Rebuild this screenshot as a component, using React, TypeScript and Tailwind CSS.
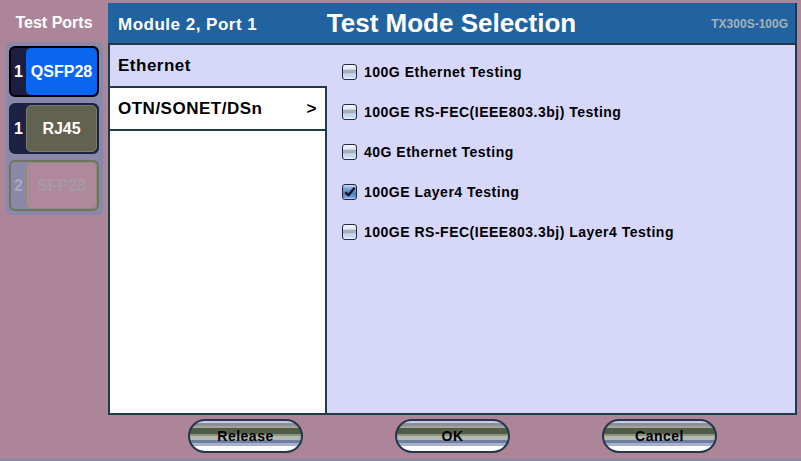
import React from "react";

const items = [
  { label: "100G Ethernet Testing", checked: false },
  { label: "100GE RS-FEC(IEEE803.3bj) Testing", checked: false },
  { label: "40G Ethernet Testing", checked: false },
  { label: "100GE Layer4 Testing", checked: true },
  { label: "100GE RS-FEC(IEEE803.3bj) Layer4 Testing", checked: false },
];

function CheckBox({ checked }: { checked: boolean }) {
  if (checked) {
    return (
      <div className="w-[15px] h-[16px] rounded-[3px] border border-[#1e2638] bg-[linear-gradient(to_bottom,#c8dcf4_0%,#7fa6d8_25%,#4f80c0_60%,#6b9ad4_85%,#b8d0f0_100%)] flex items-center justify-center shrink-0">
        <svg width="12" height="12" viewBox="0 0 12 12">
          <path d="M1.5 6.2 L4.4 9.3 L10.6 1.8" fill="none" stroke="#0f1428" strokeWidth="2.4" strokeLinejoin="round" />
        </svg>
      </div>
    );
  }
  return (
    <div className="w-[15px] h-[16px] rounded-[3px] border border-[#242a3a] bg-[linear-gradient(to_bottom,#f4f7fd_0%,#dfe7f5_30%,#a7adb4_38%,#a7adb4_56%,#bcd3f0_62%,#c9dcf4_85%,#eef4fc_100%)] shrink-0" />
  );
}

function PillButton({ label }: { label: string }) {
  return (
    <div className="w-[115px] h-[34px] rounded-full border-2 border-[#26364a] bg-[linear-gradient(to_bottom,#c9c9ef_0%,#c9c9ef_7%,#8c9094_7%,#8c9094_15%,#a4a498_15%,#a4a498_23%,#4e5c48_23%,#4e5c48_43%,#8c9482_43%,#8c9482_50%,#b6baae_50%,#b6baae_62%,#6e7ea0_62%,#6e7ea0_73%,#a8b0cc_73%,#a8b0cc_84%,#ffffff_84%,#ffffff_100%)] flex items-center justify-center text-[14px] font-bold tracking-[0.5px] text-black">
      {label}
    </div>
  );
}

export default function App() {
  return (
    <div className="w-[801px] h-[461px] bg-[#ad8599] border-b-2 border-[#8888a4] flex overflow-hidden font-['Liberation_Sans',Arial,sans-serif]">
      {/* Left column */}
      <div className="w-[108px] shrink-0 flex flex-col">
        <div className="h-[42px] pt-[3px] flex items-center justify-center text-white font-bold text-[16px]">Test Ports</div>
        <div className="ml-[6px] w-[97px] h-[173px] rounded-[6px] bg-[#8a88a8] pl-[3px] py-[4px] flex flex-col gap-[6px]">
          {/* Port 1 */}
          <div className="w-[90px] h-[51px] rounded-[6px] border-2 border-black bg-[#1b1e3e] flex overflow-hidden">
            <div className="w-[15px] flex items-center justify-center text-white font-bold text-[16px]">1</div>
            <div className="flex-1 rounded-[5px] bg-[#0a66f0] flex items-center justify-center text-white font-bold text-[16px]">QSFP28</div>
          </div>
          {/* Port 2 */}
          <div className="w-[90px] h-[51px] rounded-[6px] border-2 border-[#1d2244] bg-[#1d2244] flex overflow-hidden">
            <div className="w-[15px] flex items-center justify-center text-white font-bold text-[16px]">1</div>
            <div className="flex-1 rounded-[5px] border border-[#7c7c6a] bg-[#626250] flex items-center justify-center text-white font-bold text-[16px]">RJ45</div>
          </div>
          {/* Port 3 */}
          <div className="w-[90px] h-[51px] rounded-[6px] border-2 border-[#6e7460] bg-[#8a88a8] flex overflow-hidden">
            <div className="w-[15px] flex items-center justify-center text-[#a9a9b9] font-bold text-[16px]">2</div>
            <div className="flex-1 rounded-[5px] border border-[#8e8e78] bg-[#b0889c] flex items-center justify-center text-[#a59aa4] font-bold text-[16px]">SFP28</div>
          </div>
        </div>
      </div>

      {/* Dialog + buttons */}
      <div className="w-[689px] shrink-0 flex flex-col pt-[3px]">
        <div className="h-[412px] flex flex-col">
          {/* Header */}
          <div className="h-[42px] shrink-0 bg-[#2163a0] border-b-2 border-r-2 border-[#1f3b4a] grid grid-cols-[1fr_auto_1fr] items-center">
            <div className="pl-[10px] pt-[2px] text-white font-bold text-[17px] tracking-[0.5px] leading-none">Module 2, Port 1</div>
            <div className="text-white font-bold text-[26px] leading-none">Test Mode Selection</div>
            <div className="text-right pr-[7px] pt-[1px] text-[#a8b0b8] font-bold text-[12px] leading-none">TX300S-100G</div>
          </div>
          {/* Body */}
          <div className="flex-1 flex bg-[#d7d7fa] border-l-2 border-r-2 border-b-2 border-[#1f3b4a]">
            <div className="w-[217px] shrink-0 flex flex-col">
              <div className="h-[41px] shrink-0 flex items-center pl-[8px] pt-[1px] text-black font-bold text-[17px] tracking-[0.5px]">Ethernet</div>
              <div className="flex-1 bg-white border-t-2 border-r-2 border-[#1f3b4a] flex flex-col">
                <div className="h-[43px] shrink-0 border-b-2 border-[#1f3b4a] flex items-center justify-between pl-[8px] pr-[8px] text-black font-bold text-[17px] tracking-[0.5px]">
                  <span>OTN/SONET/DSn</span>
                  <span>&gt;</span>
                </div>
              </div>
            </div>
            <div className="flex-1 pt-[7px] pl-[15px] flex flex-col">
              {items.map((it) => (
                <div key={it.label} className="h-[40px] flex items-center gap-[7px]">
                  <CheckBox checked={it.checked} />
                  <span className="text-black font-bold text-[14px] tracking-[0.5px]">{it.label}</span>
                </div>
              ))}
            </div>
          </div>
        </div>
        {/* Buttons */}
        <div className="mt-[4px] flex justify-center gap-[92px]">
          <PillButton label="Release" />
          <PillButton label="OK" />
          <PillButton label="Cancel" />
        </div>
      </div>
    </div>
  );
}
